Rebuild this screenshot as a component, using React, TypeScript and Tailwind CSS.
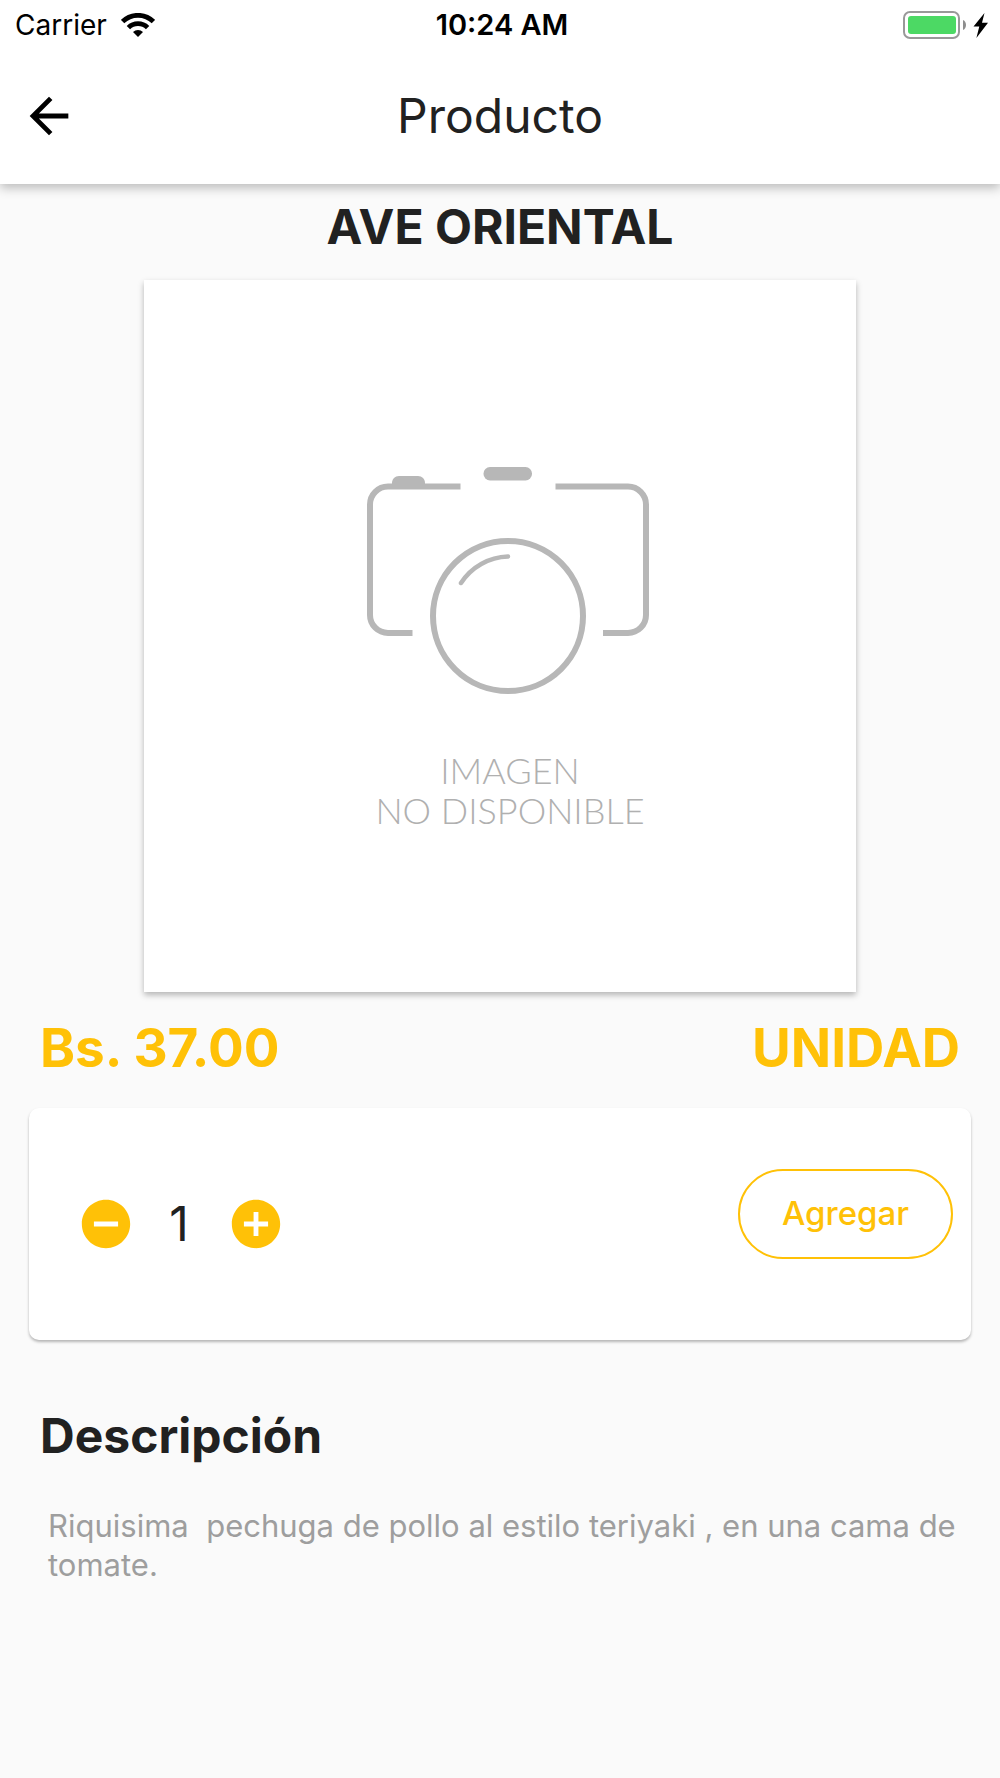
import { useState } from 'react';
import { MdAddCircle, MdArrowBack, MdRemoveCircle } from 'react-icons/md';

const product = {
  name: 'AVE ORIENTAL',
  price: 37,
  unit: 'UNIDAD',
  description:
    'Riquisima  pechuga de pollo al estilo teriyaki , en una cama de tomate.',
};

function WifiIcon() {
  return (
    <svg width="34" height="24" viewBox="0 0 34 24" aria-hidden="true">
      <g fill="none" stroke="#000" strokeWidth="4.8">
        <path d="M1.6 8.6a22 22 0 0 1 30.8 0" />
        <path d="M7.4 14.6a13.8 13.8 0 0 1 19.2 0" />
      </g>
      <path d="M17 24l-5-5a7.4 7.4 0 0 1 10 0z" />
    </svg>
  );
}

function BatteryIcon() {
  return (
    <svg width="86" height="28" viewBox="0 0 86 28" aria-hidden="true">
      <rect x="1" y="1" width="55" height="26" rx="6" fill="none" stroke="#999" strokeWidth="2" />
      <rect x="5" y="5" width="48" height="18" rx="3" fill="#4cd964" />
      <path d="M60 9c4 1.6 4 8.4 0 10z" fill="#8e8e8e" />
      <path d="M81.500 2L70.500 15.600h5.800L73.400 27 85 11.800h-6z" fill="#000" />
    </svg>
  );
}

function StatusBar() {
  return (
    <div className="grid h-[50px] grid-cols-3 items-center pr-[11px] pl-[15px] text-[28px] text-black">
      <div className="flex items-center gap-3.5">
        <span>Carrier</span>
        <WifiIcon />
      </div>
      <span className="text-center text-[29px] font-semibold">10:24 AM</span>
      <div className="flex justify-end">
        <BatteryIcon />
      </div>
    </div>
  );
}

function CameraPlaceholder() {
  return (
    <div className="mx-36 mt-[25px] flex aspect-square flex-col items-center bg-white pt-[187px] pl-4 shadow-[0_3px_6px_rgba(0,0,0,0.28)]">
      <svg width="282" height="228" viewBox="17 17 282 228" aria-hidden="true">
        <g fill="none" stroke="#b7b7b7" strokeWidth="6">
          <path d="M110.500 36.500H38a18 18 0 0 0-18 18V165a18 18 0 0 0 18 18h24.500" />
          <path d="M205.500 36.500H278a18 18 0 0 1 18 18V165a18 18 0 0 1-18 18h-25" />
          <circle cx="158" cy="166" r="75" />
          <path d="M111 133a58 58 0 0 1 47-26.500" strokeWidth="4.500" strokeLinecap="round" />
        </g>
        <path d="M42 36v-3c0-4 3-7 7-7h19c4 0 7 3 7 7v3z" fill="#b7b7b7" />
        <rect x="133.500" y="17" width="48.500" height="13.500" rx="6.500" fill="#b7b7b7" />
      </svg>
      <p className="mt-[55px] pl-1 text-center font-[Lato] text-[36px] leading-10 font-light text-[#b0b0b0]">
        IMAGEN
        <br />
        NO DISPONIBLE
      </p>
    </div>
  );
}

function QuantityCard() {
  const [quantity, setQuantity] = useState(1);

  return (
    <section className="mx-[29px] flex h-[232px] items-center justify-between rounded-[10px] bg-white pr-[18px] pl-12 shadow-[0_2px_3px_rgba(0,0,0,0.28)]">
      <div className="flex items-center">
        <button
          type="button"
          aria-label="Quitar uno"
          onClick={() => setQuantity(Math.max(1, quantity - 1))}
          className="text-[58px] text-[#ffc107]"
        >
          <MdRemoveCircle />
        </button>
        <span className="w-[92px] pr-1 text-center text-5xl">{quantity}</span>
        <button
          type="button"
          aria-label="Agregar uno"
          onClick={() => setQuantity(quantity + 1)}
          className="text-[58px] text-[#ffc107]"
        >
          <MdAddCircle />
        </button>
      </div>
      <button
        type="button"
        className="mb-5 h-[90px] w-[215px] rounded-full border-2 border-[#ffc107] text-[33px] font-medium text-[#ffc107]"
      >
        Agregar
      </button>
    </section>
  );
}

export default function App() {
  return (
    <div className="min-h-screen bg-[#fafafa] font-[Inter,sans-serif] text-[#212121]">
      <header className="relative bg-white pb-0.5 shadow-[0_4px_10px_rgba(0,0,0,0.25)]">
        <StatusBar />
        <div className="grid h-[132px] grid-cols-[58px_1fr_58px] items-center px-5">
          <button type="button" aria-label="Volver" className="text-[58px] text-black">
            <MdArrowBack />
          </button>
          <h1 className="text-center text-5xl">Producto</h1>
        </div>
      </header>
      <main>
        <h2 className="pt-[15px] text-center text-5xl leading-14 font-bold">{product.name}</h2>
        <CameraPlaceholder />
        <div className="mt-6 mb-7 flex justify-between px-10 text-[53px] leading-16 font-bold text-[#ffc107]">
          <span>Bs. {product.price.toFixed(2)}</span>
          <span>{product.unit}</span>
        </div>
        <QuantityCard />
        <h3 className="mt-[68px] px-10 text-5xl leading-14 font-bold">Descripción</h3>
        <p className="mt-[42px] pr-8 pl-12 text-[31px] leading-[39px] whitespace-pre-wrap text-[#9e9e9e]">
          {product.description}
        </p>
      </main>
    </div>
  );
}
